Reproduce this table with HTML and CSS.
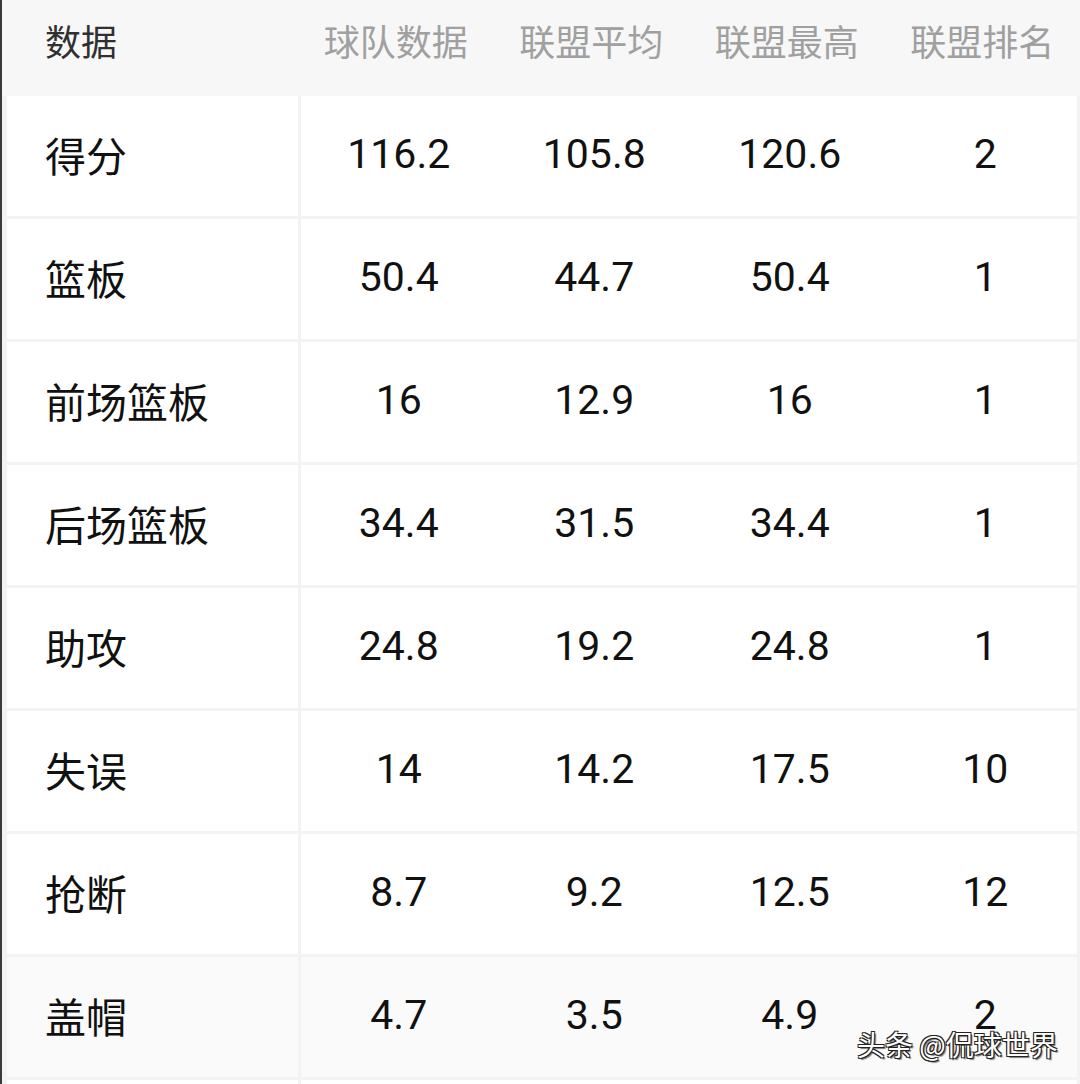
FILE: index.html
```html
<!DOCTYPE html>
<html lang="zh-CN">
<head>
<meta charset="utf-8">
<title>球队数据</title>
<link rel="stylesheet" href="styles.css">
</head>
<body>
<div class="page">
  <div class="head">
    <div class="hlabel">数据</div>
    <div class="hcols">
      <div class="hcell">球队数据</div>
      <div class="hcell">联盟平均</div>
      <div class="hcell">联盟最高</div>
      <div class="hcell">联盟排名</div>
    </div>
  </div>
  <div class="row"><div class="label">得分</div><div class="cols"><div class="cell">116.2</div><div class="cell">105.8</div><div class="cell">120.6</div><div class="cell">2</div></div></div>
  <div class="row"><div class="label">篮板</div><div class="cols"><div class="cell">50.4</div><div class="cell">44.7</div><div class="cell">50.4</div><div class="cell">1</div></div></div>
  <div class="row"><div class="label">前场篮板</div><div class="cols"><div class="cell">16</div><div class="cell">12.9</div><div class="cell">16</div><div class="cell">1</div></div></div>
  <div class="row"><div class="label">后场篮板</div><div class="cols"><div class="cell">34.4</div><div class="cell">31.5</div><div class="cell">34.4</div><div class="cell">1</div></div></div>
  <div class="row"><div class="label">助攻</div><div class="cols"><div class="cell">24.8</div><div class="cell">19.2</div><div class="cell">24.8</div><div class="cell">1</div></div></div>
  <div class="row"><div class="label">失误</div><div class="cols"><div class="cell">14</div><div class="cell">14.2</div><div class="cell">17.5</div><div class="cell">10</div></div></div>
  <div class="row"><div class="label">抢断</div><div class="cols"><div class="cell">8.7</div><div class="cell">9.2</div><div class="cell">12.5</div><div class="cell">12</div></div></div>
  <div class="row row-soft"><div class="label">盖帽</div><div class="cols"><div class="cell">4.7</div><div class="cell">3.5</div><div class="cell">4.9</div><div class="cell">2</div></div></div>
  <div class="row"><div class="label"></div><div class="cols"></div></div>
</div>
<div class="watermark">头条 @侃球世界</div>
</body>
</html>
```

FILE: styles.css
```css
html, body {
  margin: 0;
  padding: 0;
}
body {
  width: 1080px;
  height: 1084px;
  overflow: hidden;
  background: #f3f3f3;
  font-family: Roboto, "Noto Sans CJK SC", sans-serif;
  position: relative;
}
.page {
  border-left: 2px solid #3a3a3a;
  height: 1084px;
  overflow: hidden;
  box-sizing: border-box;
  background: #f3f3f3;
}
.head {
  height: 96px;
  background: #f7f7f7;
  display: flex;
  align-items: center;
  padding-bottom: 16px;
  box-sizing: border-box;
}
.hlabel {
  width: 296px;
  padding-left: 43px;
  box-sizing: border-box;
  font-size: 36px;
  color: #303030;
}
.hcols {
  display: flex;
}
.hcell {
  flex: 0 0 195.5px;
  text-align: center;
  font-size: 36px;
  color: #a0a0a0;
}
.row {
  display: flex;
  height: 120px;
  margin-bottom: 3px;
  padding-left: 5px;
}
.label {
  width: 291px;
  margin-right: 3px;
  background: #ffffff;
  display: flex;
  align-items: center;
  padding-left: 38px;
  padding-bottom: 5px;
  box-sizing: border-box;
  font-size: 41px;
  color: #111111;
}
.cols {
  width: 776px;
  background: #ffffff;
  display: flex;
  align-items: center;
  padding-bottom: 5px;
  box-sizing: border-box;
}
.cell {
  flex: 0 0 195.5px;
  text-align: center;
  font-size: 41px;
  color: #111111;
}
.row-soft .label,
.row-soft .cols {
  background: #fafafa;
}
.watermark {
  position: absolute;
  left: 857px;
  top: 1024px;
  font-family: "Noto Sans CJK SC", sans-serif;
  font-size: 28px;
  color: #ffffff;
  text-shadow: -1px -1px 0 #222, 1px -1px 0 #222, -1px 1px 0 #222, 1px 1px 0 #222, 2px 2px 1px rgba(0,0,0,0.5);
  white-space: nowrap;
}
```
